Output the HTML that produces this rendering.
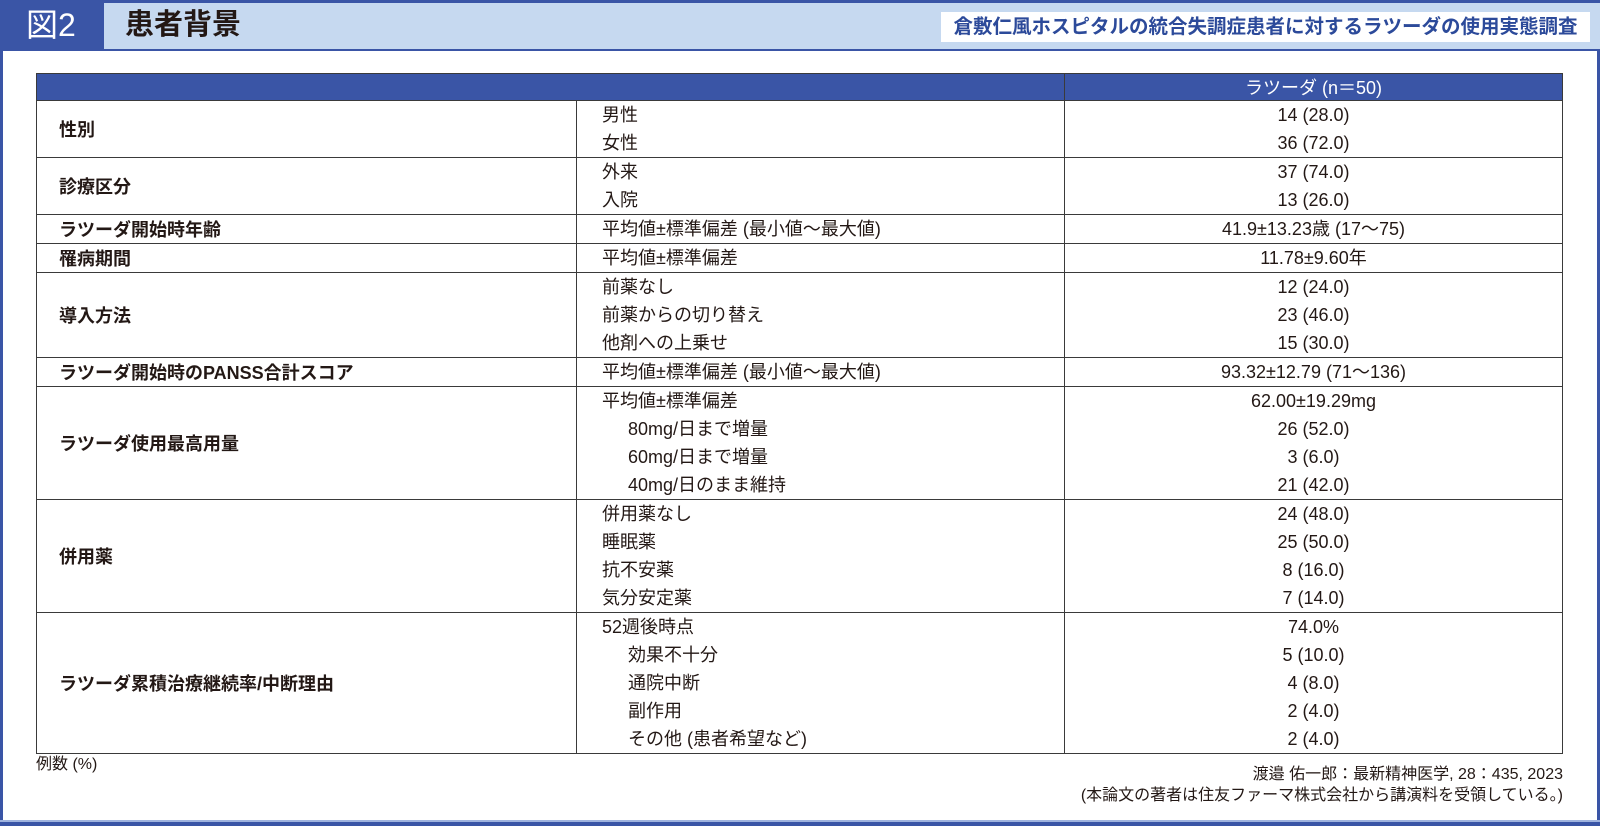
<!DOCTYPE html>
<html><head><meta charset="utf-8"><style>
*{margin:0;padding:0;box-sizing:border-box}
body{width:1600px;height:826px;background:#fff;position:relative;overflow:hidden;font-family:"Liberation Sans","Noto Sans CJK JP",sans-serif;color:#231815}
.frame{position:absolute;left:0;top:0;width:1600px;height:826px;border:3px solid #3a55a6;border-top:none}
.band{position:absolute;left:0;top:0;width:1600px;height:51px;background:#c6d9f0;border-top:3px solid #3a55a6;border-bottom:2px solid #3a55a6}
.fig{position:absolute;left:0;top:0;width:104px;height:51px;background:#3a55a6;color:#fff;font-size:32px;line-height:51px;padding-left:26px}
.ttl{position:absolute;left:125px;top:0;height:51px;line-height:51px;font-size:29px;font-weight:bold;color:#231815}
.sub{position:absolute;left:941px;top:12px;width:649px;height:30px;background:#fff;color:#2c4a9a;font-size:19.5px;font-weight:bold;line-height:30px;text-align:center}
table{position:absolute;left:36px;top:73px;width:1527px;border-collapse:collapse;font-size:18px}
td{border:1.5px solid #3a3a3a;vertical-align:middle}
th{background:#3a55a6;color:#fff;font-weight:normal;height:27px;border:1.5px solid #3a3a3a;font-size:18px}
th.b{border-left:1px solid #8a9ccc}
.c1{width:540px;padding-left:22px;font-weight:bold}
.c2{width:488px;padding-left:25px}
.c3{text-align:center}
.l{height:28px;line-height:28px;white-space:nowrap}
.i{padding-left:26px}
.foot1{position:absolute;left:36px;top:750px;font-size:16px}
.foot2{position:absolute;right:37px;top:764px;font-size:16px;text-align:right;line-height:21px}
.bl{position:absolute;left:0;top:820px;width:1600px;height:6px;background:#3a55a6;border-top:2px solid #9fb3de}
</style></head><body>
<div class="frame"></div>
<div class="band"></div>
<div class="fig">図2</div>
<div class="ttl">患者背景</div>
<div class="sub">倉敷仁風ホスピタルの統合失調症患者に対するラツーダの使用実態調査</div>
<table>
<tr><th colspan="2"></th><th class="b">ラツーダ (n＝50)</th></tr>
<tr><td class="c1">性別</td><td class="c2"><div class="l">男性</div><div class="l">女性</div></td><td class="c3"><div class="l">14 (28.0)</div><div class="l">36 (72.0)</div></td></tr>
<tr><td class="c1">診療区分</td><td class="c2"><div class="l">外来</div><div class="l">入院</div></td><td class="c3"><div class="l">37 (74.0)</div><div class="l">13 (26.0)</div></td></tr>
<tr><td class="c1">ラツーダ開始時年齢</td><td class="c2"><div class="l">平均値±標準偏差 (最小値～最大値)</div></td><td class="c3"><div class="l">41.9±13.23歳 (17～75)</div></td></tr>
<tr><td class="c1">罹病期間</td><td class="c2"><div class="l">平均値±標準偏差</div></td><td class="c3"><div class="l">11.78±9.60年</div></td></tr>
<tr><td class="c1">導入方法</td><td class="c2"><div class="l">前薬なし</div><div class="l">前薬からの切り替え</div><div class="l">他剤への上乗せ</div></td><td class="c3"><div class="l">12 (24.0)</div><div class="l">23 (46.0)</div><div class="l">15 (30.0)</div></td></tr>
<tr><td class="c1">ラツーダ開始時のPANSS合計スコア</td><td class="c2"><div class="l">平均値±標準偏差 (最小値～最大値)</div></td><td class="c3"><div class="l">93.32±12.79 (71～136)</div></td></tr>
<tr><td class="c1">ラツーダ使用最高用量</td><td class="c2"><div class="l">平均値±標準偏差</div><div class="l i">80mg/日まで増量</div><div class="l i">60mg/日まで増量</div><div class="l i">40mg/日のまま維持</div></td><td class="c3"><div class="l">62.00±19.29mg</div><div class="l">26 (52.0)</div><div class="l">3 (6.0)</div><div class="l">21 (42.0)</div></td></tr>
<tr><td class="c1">併用薬</td><td class="c2"><div class="l">併用薬なし</div><div class="l">睡眠薬</div><div class="l">抗不安薬</div><div class="l">気分安定薬</div></td><td class="c3"><div class="l">24 (48.0)</div><div class="l">25 (50.0)</div><div class="l">8 (16.0)</div><div class="l">7 (14.0)</div></td></tr>
<tr><td class="c1">ラツーダ累積治療継続率/中断理由</td><td class="c2"><div class="l">52週後時点</div><div class="l i">効果不十分</div><div class="l i">通院中断</div><div class="l i">副作用</div><div class="l i">その他 (患者希望など)</div></td><td class="c3"><div class="l">74.0%</div><div class="l">5 (10.0)</div><div class="l">4 (8.0)</div><div class="l">2 (4.0)</div><div class="l">2 (4.0)</div></td></tr>
</table>
<div class="foot1">例数 (%)</div>
<div class="foot2">渡邉 佑一郎：最新精神医学, 28：435, 2023<br>(本論文の著者は住友ファーマ株式会社から講演料を受領している。)</div>
<div class="bl"></div>
</body></html>
